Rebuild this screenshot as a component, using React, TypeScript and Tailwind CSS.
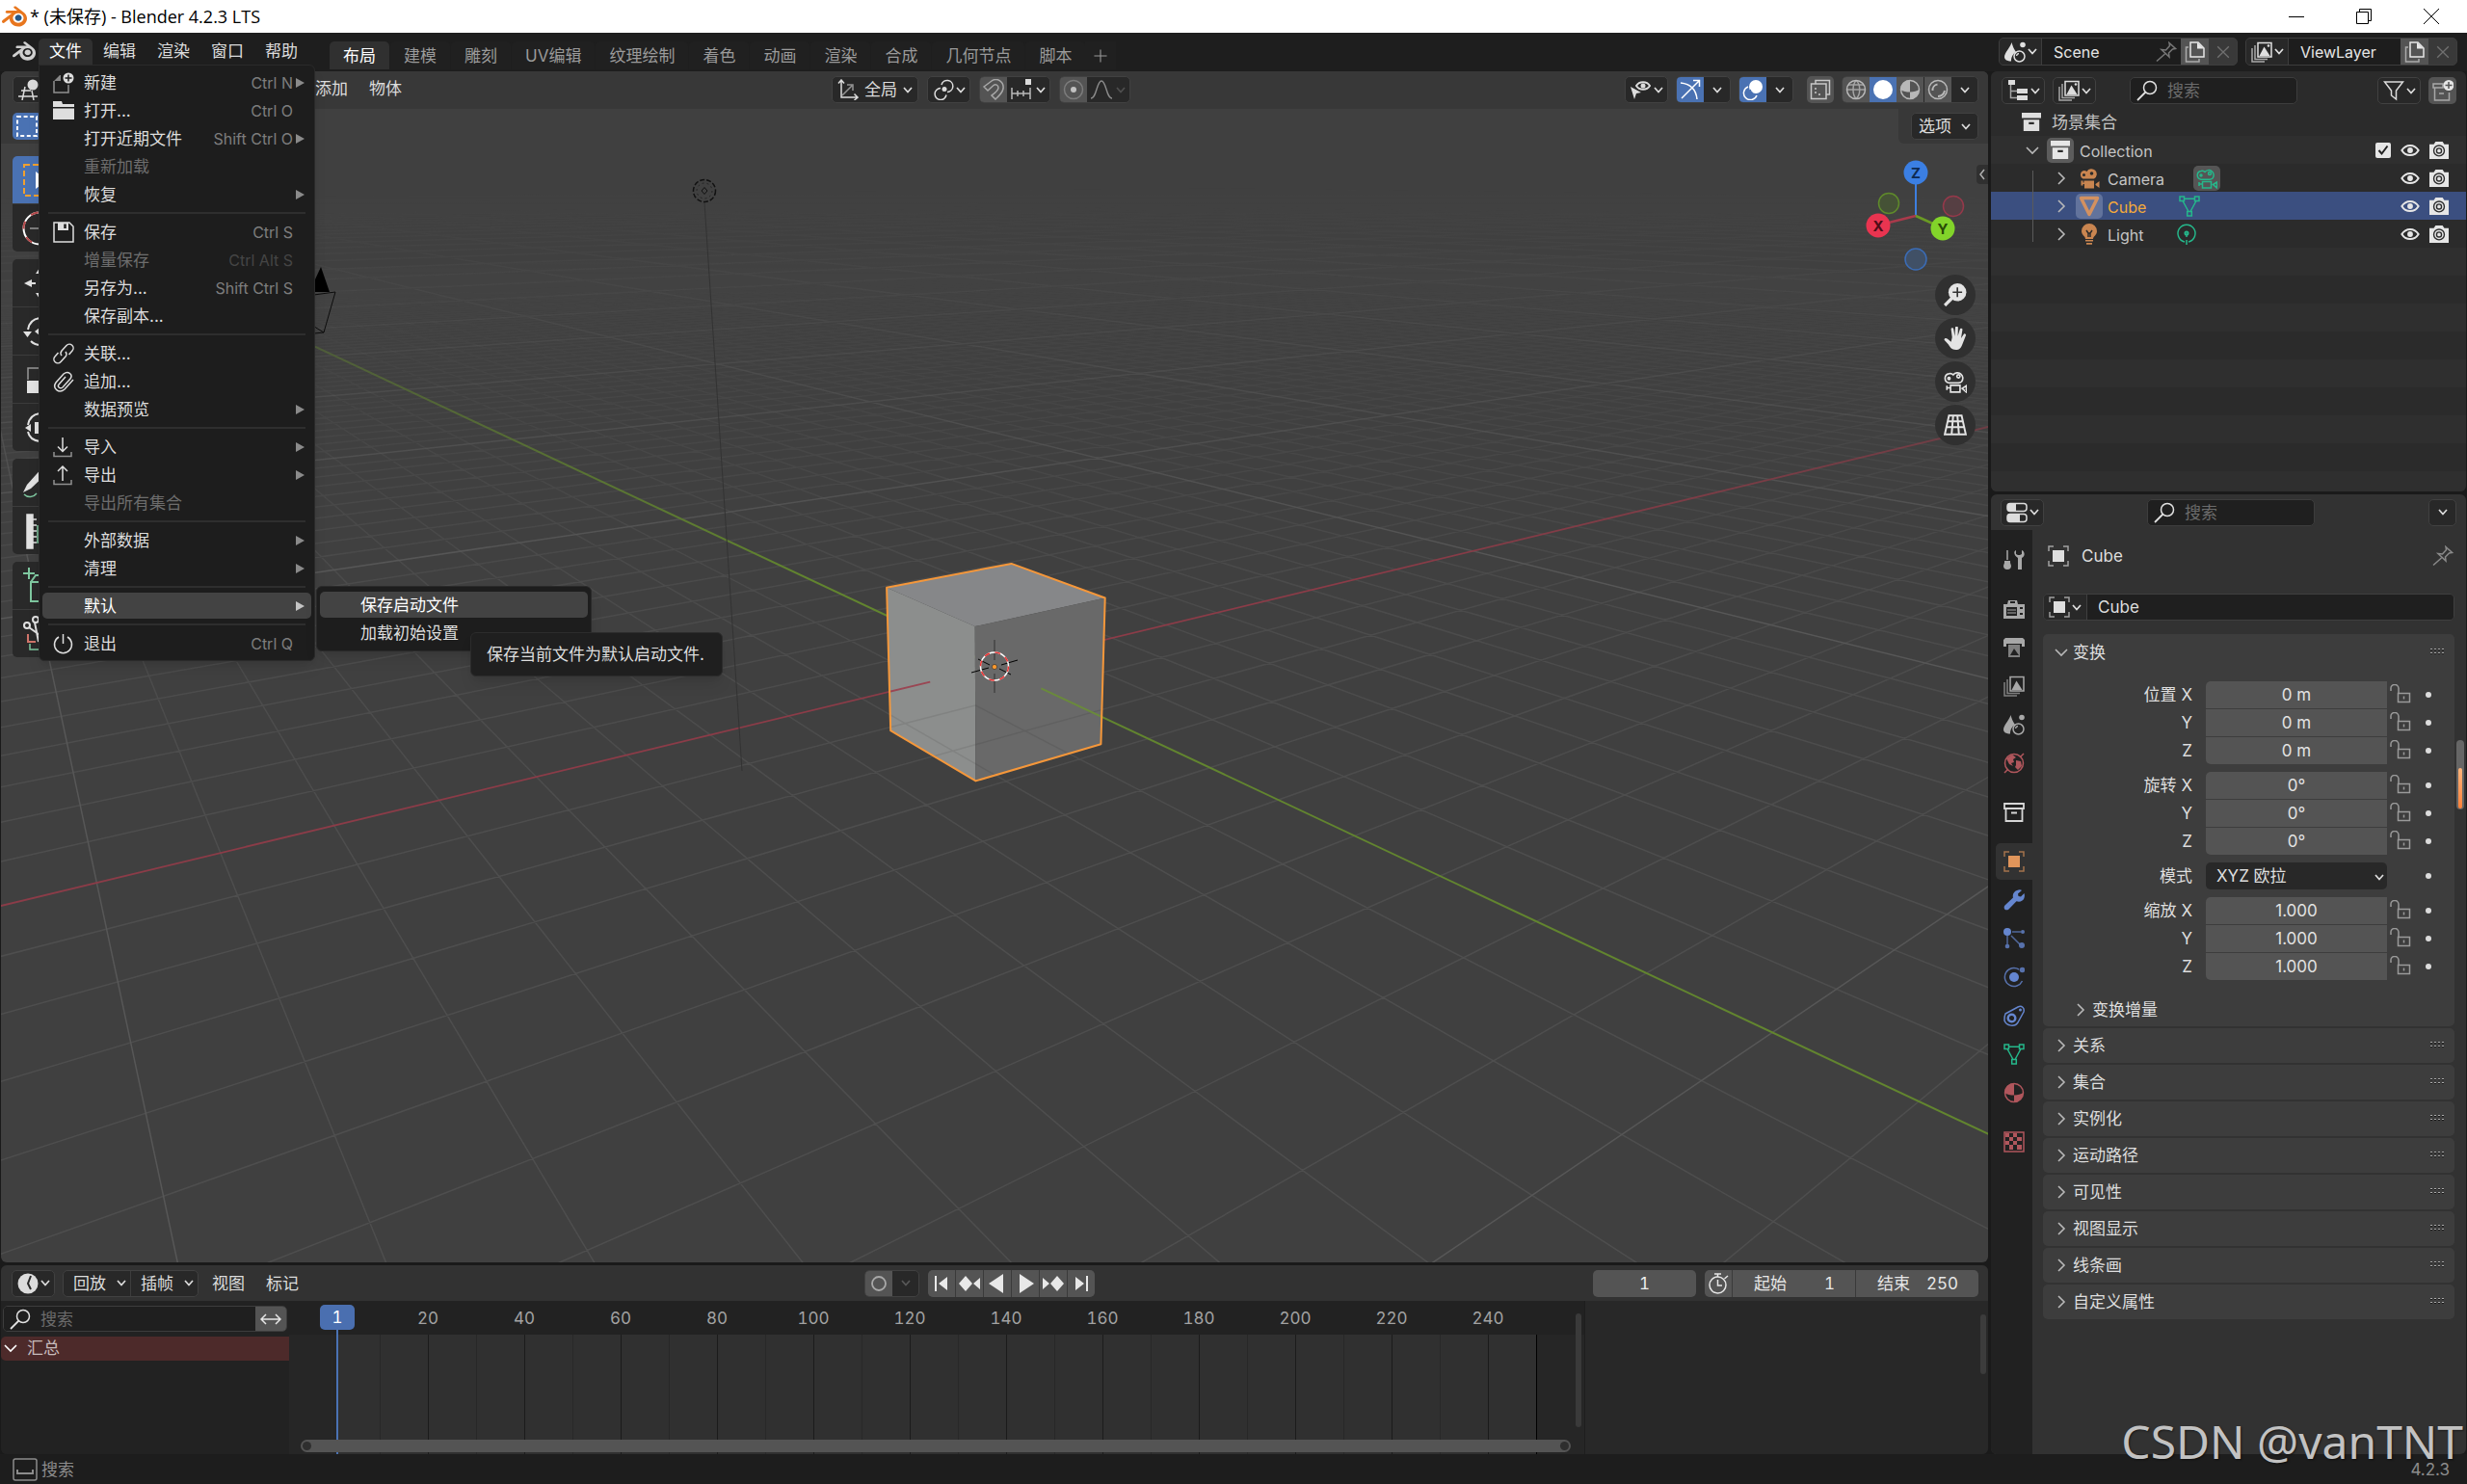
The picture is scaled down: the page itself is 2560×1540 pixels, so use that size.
import type { ReactNode } from 'react';
import clsx from 'clsx';

type Vec3 = [number, number, number];

/* ---------- icons ---------- */

function Ico({ children, size = 22, className }: { children: ReactNode; size?: number; className?: string }) {
  return (
    <svg
      width={size}
      height={size}
      viewBox="0 0 22 22"
      fill="none"
      stroke="currentColor"
      strokeWidth="1.5"
      className={clsx('shrink-0', className)}
      aria-hidden="true"
    >
      {children}
    </svg>
  );
}

function Chevron({ className }: { className?: string }) {
  return (
    <svg width="10" height="7" viewBox="0 0 10 7" fill="none" stroke="currentColor" strokeWidth="1.7" className={clsx('shrink-0', className)} aria-hidden="true">
      <path d="M1 1l4 4.5L9 1" />
    </svg>
  );
}

function Disclosure({ open, className }: { open?: boolean; className?: string }) {
  return (
    <svg width="14" height="14" viewBox="0 0 14 14" fill="none" stroke="currentColor" strokeWidth="1.6" className={clsx('shrink-0 text-[#b8b8b8]', className)} aria-hidden="true">
      {open ? <path d="M1 4l6 6 6-6" /> : <path d="M4 1l6 6-6 6" />}
    </svg>
  );
}

function BlenderLogo({ size, ring, pupil }: { size: number; ring: string; pupil: string }) {
  return (
    <svg width={size} height={size} viewBox="0 0 24 24" aria-hidden="true">
      <path
        fill={pupil}
        d="M12.51 13.214c.046-.8.438-1.506 1.03-2.006a3.424 3.424 0 0 1 2.212-.79c.85 0 1.631.3 2.211.79.592.5.983 1.206 1.028 2.005.045.823-.285 1.586-.865 2.153a3.389 3.389 0 0 1-2.374.938 3.393 3.393 0 0 1-2.376-.938c-.58-.567-.91-1.33-.865-2.152"
      />
      <path
        fill={ring}
        d="M7.35 14.831c.006.314.106.922.256 1.398a7.372 7.372 0 0 0 1.593 2.757 8.227 8.227 0 0 0 2.787 2.001 8.947 8.947 0 0 0 3.66.76 8.964 8.964 0 0 0 3.657-.772 8.285 8.285 0 0 0 2.785-2.01 7.428 7.428 0 0 0 1.592-2.762 6.964 6.964 0 0 0 .25-3.074 7.123 7.123 0 0 0-1.016-2.779 7.764 7.764 0 0 0-1.852-2.043h.002L13.566 2.55l-.02-.015c-.492-.378-1.319-.376-1.86.002-.547.382-.609 1.015-.123 1.415l-.001.001 3.126 2.543-9.53.01h-.013c-.788.001-1.545.518-1.695 1.172-.154.665.38 1.217 1.2 1.22V8.9l4.83-.01-8.62 6.617-.034.025c-.813.622-1.075 1.658-.563 2.315.52.667 1.625.668 2.447.004L7.414 14s-.069.52-.063.831zm12.09 1.741c-.97.988-2.326 1.548-3.795 1.55-1.47.004-2.827-.552-3.797-1.538a4.51 4.51 0 0 1-1.036-1.622 4.282 4.282 0 0 1 .282-3.519 4.702 4.702 0 0 1 1.153-1.371c.942-.768 2.141-1.183 3.396-1.185 1.256-.002 2.455.41 3.398 1.175.48.391.87.854 1.152 1.367a4.28 4.28 0 0 1 .522 1.706 4.236 4.236 0 0 1-.239 1.811 4.54 4.54 0 0 1-1.035 1.626"
      />
    </svg>
  );
}

const NewFileIcon = () => (
  <Ico>
    <path d="M8.5 3H7L1 9h7V3z" fill="currentColor" stroke="none" opacity=".55" />
    <path d="M1 9v12h15v-8" opacity=".6" />
    <circle cx="16" cy="6" r="5.5" fill="currentColor" stroke="none" />
    <path d="M16 2.5v7M12.5 6h7" stroke="#1d1d1d" />
  </Ico>
);
const FolderIcon = () => (
  <Ico>
    <path d="M0 1h9l1 3h12v3H0zM0 8.500h22V20H0z" fill="currentColor" stroke="none" />
  </Ico>
);
const SaveIcon = () => (
  <Ico>
    <path d="M1 1h16l4 4v16H1z" />
    <path d="M5 1h11v8H5z" fill="currentColor" stroke="none" />
    <path d="M12.500 2.500v4.500" stroke="#1d1d1d" strokeWidth="2.500" />
  </Ico>
);
const LinkIcon = () => (
  <Ico>
    <path d="M9 13a4 4 0 0 1 0-5l5-5.500a4 4 0 0 1 6 5.500L16.500 12M13 9a4 4 0 0 1 0 5l-5 5.500a4 4 0 0 1-6-5.500L5.500 10" />
  </Ico>
);
const ClipIcon = () => (
  <Ico>
    <path d="M21 9l-9 10c-6 5-13-1-9-7l8-9c5-4 10 1 7 5l-8 9c-3 2-6-1-4-3l7-8" />
  </Ico>
);
const ImportIcon = () => (
  <Ico>
    <path d="M1 16v4.500h18V16" opacity=".6" />
    <path d="M10 1v14M5 10.500l5 5 5-5" />
  </Ico>
);
const ExportIcon = () => (
  <Ico>
    <path d="M1 16v4.500h18V16" opacity=".6" />
    <path d="M10 17V2M5 7l5-5 5 5" />
  </Ico>
);
const PowerIcon = () => (
  <Ico>
    <path d="M6 4a9 9 0 1 0 9 0" />
    <path d="M10.500 1v10" />
  </Ico>
);
const SearchIcon = ({ className }: { className?: string }) => (
  <Ico className={className}>
    <circle cx="14" cy="8" r="6.500" />
    <path d="M9.500 12.500L1 21" strokeWidth="1.800" />
  </Ico>
);
const PinIcon = ({ className }: { className?: string }) => (
  <Ico className={className}>
    <path d="M14 1.500l6.500 6-3 .5-4 4 .5 4-8-7.500 4.500.5 4-4.500zM9.500 13L1 20.500" />
  </Ico>
);
const CopyIcon = () => (
  <Ico>
    <path d="M6 1h8l6 6v9H6z" fill="none" />
    <path d="M13 1l7 6.500h-7z" fill="currentColor" stroke="none" />
    <path d="M4 6H1.500v15H15v-3" opacity=".6" />
  </Ico>
);
const CrossIcon = () => (
  <Ico size={16}>
    <path d="M3 3l16 16M19 3L3 19" strokeWidth="1.800" />
  </Ico>
);
const SceneIcon = ({ className }: { className?: string }) => (
  <Ico className={className}>
    <path d="M7.500 1C6 6 0 12 0 16c0 3 3 4.500 7 4.500C7 16 9 12.500 12 11 10 8 8.500 5 7.500 1z" fill="currentColor" stroke="none" />
    <circle cx="19" cy="3.500" r="2.800" fill="currentColor" stroke="none" />
    <circle cx="15.500" cy="15.500" r="5.500" />
    <path d="M12.500 15a3 3 0 0 1 2.500-2.500" />
  </Ico>
);
const LayersIcon = ({ className }: { className?: string }) => (
  <Ico className={className}>
    <path d="M7 1.500h14V16H7z" />
    <path d="M8.500 15l5-9.500L19.500 15z" fill="currentColor" stroke="none" />
    <circle cx="18" cy="4.500" r="1.300" fill="currentColor" stroke="none" />
    <path d="M4 4v14.500h13M1 7v14h13" opacity=".7" />
  </Ico>
);
const ArchiveIcon = ({ className }: { className?: string }) => (
  <Ico className={className} size={20}>
    <path d="M0 0h22v6H0zM2 8h18v13H2z" fill="currentColor" stroke="none" />
    <path d="M8 12h6" stroke="#2b2b2b" strokeWidth="2.500" />
  </Ico>
);
const CameraShape = ({ filled }: { filled?: boolean }) =>
  filled ? (
    <>
      <path d="M5.500 3a4.500 4.500 0 0 1 3 1A5.500 5.500 0 1 1 16 11.500H4.500A4.500 4.500 0 0 1 5.500 3z" fill="currentColor" stroke="none" />
      <circle cx="5.500" cy="7.500" r="1.500" fill="#2b2b2b" stroke="none" />
      <circle cx="13.500" cy="6" r="1.800" fill="#2b2b2b" stroke="none" />
      <path d="M2.500 13.500h2v2h1v-2H16v8H6V17H4.500v1.500h-2zM17.500 17l4-3v7l-4-3z" fill="currentColor" stroke="none" />
    </>
  ) : (
    <>
      <path d="M5 3.500a4 4 0 0 1 4 1A5 5 0 1 1 17 11c-1 1-2 1.200-3 1.200H5A4.400 4.400 0 0 1 5 3.500z" />
      <circle cx="5" cy="8" r="1" />
      <circle cx="14" cy="6" r="1.500" />
      <path d="M6.500 14.500h9V21h-9zM3 15v4M3 17h3M17.500 17.500l4-2.500v6z" />
    </>
  );
const EyeIcon = () => (
  <Ico size={20}>
    <path d="M1.500 11C6 3.500 16 3.500 20.500 11 16 18.500 6 18.500 1.500 11z" strokeWidth="2.200" />
    <circle cx="11" cy="11" r="3.200" fill="currentColor" stroke="none" />
  </Ico>
);
const PhotoIcon = () => (
  <Ico size={20}>
    <path d="M0 4h5l2-3h8l2 3h5v17H0z" fill="currentColor" stroke="none" />
    <circle cx="11" cy="11.500" r="6" stroke="#2b2b2b" />
    <circle cx="11" cy="11.500" r="2.800" stroke="#2b2b2b" />
  </Ico>
);
const MeshDataIcon = ({ size = 22 }: { size?: number }) => (
  <Ico size={size}>
    <path d="M1 1h4.500v4.500H1zM16.500 1H21v4.500h-4.500zM8.700 16.500h4.600V21H8.700zM5.500 3.200h11M4 5.500l6 11M18 5.500l-6 11" />
  </Ico>
);
const ObjectIcon = ({ className }: { className?: string }) => (
  <Ico className={className}>
    <path d="M1 6V1h5M16 1h5v5M21 16v5h-5M6 21H1v-5" opacity=".65" />
    <path d="M5 5h12v12H5z" fill="currentColor" stroke="none" />
  </Ico>
);

/* ---------- 3D scene ---------- */

const VIEW = { cx: 1032, cy: 691.5, focal: 1432, dist: 17.98 };
const SIN_AZ = 0.8132;
const COS_AZ = 0.582;
const SIN_EL = 0.3368;
const COS_EL = 0.9416;

const depthOf = ([x, y, z]: Vec3) => VIEW.dist - (COS_EL * COS_AZ * x + COS_EL * SIN_AZ * y + SIN_EL * z);

function project(p: Vec3): [number, number] {
  const [x, y, z] = p;
  const k = VIEW.focal / depthOf(p);
  const right = -SIN_AZ * x + COS_AZ * y;
  const up = -SIN_EL * COS_AZ * x - SIN_EL * SIN_AZ * y + COS_EL * z;
  return [Math.round((VIEW.cx + right * k) * 10) / 10, Math.round((VIEW.cy - up * k) * 10) / 10];
}

// Line segment on the ground plane, cut off in front of the camera.
function segment(a: Vec3, b: Vec3) {
  const near = 1;
  const da = depthOf(a);
  const db = depthOf(b);
  if (da < near && db < near) return '';
  const lerp = (t: number): Vec3 => [a[0] + (b[0] - a[0]) * t, a[1] + (b[1] - a[1]) * t, a[2] + (b[2] - a[2]) * t];
  const t = (near - da) / (db - da);
  const p = project(da < near ? lerp(t) : a);
  const q = project(db < near ? lerp(t) : b);
  return `M${p[0]} ${p[1]}L${q[0]} ${q[1]}`;
}

function gridPath(reach: number, step: number, skip: number) {
  let d = '';
  for (let i = -reach; i <= reach; i += step) {
    if (i === 0 || (skip && i % skip === 0)) continue;
    d += segment([i, -reach, 0], [i, reach, 0]) + segment([-reach, i, 0], [reach, i, 0]);
  }
  return d;
}

const MINOR = gridPath(90, 1, 10);
const MAJOR = gridPath(400, 10, 0);

let frontGrid = '';
for (let i = -1; i <= 4; i++) {
  if (i === 0) continue;
  frontGrid += segment([i, i > 1 ? -6 : 1, 0], [i, 6, 0]) + segment([i > 1 ? -6 : 1, i, 0], [6, i, 0]);
}

const poly = (...pts: Vec3[]) => pts.map((p) => project(p).join(',')).join(' ');
const TOP = poly([1, -1, 1], [-1, -1, 1], [-1, 1, 1], [1, 1, 1]);
const LEFT = poly([1, -1, 1], [1, 1, 1], [1, 1, -1], [1, -1, -1]);
const RIGHT = poly([1, 1, 1], [-1, 1, 1], [-1, 1, -1], [1, 1, -1]);
const OUTLINE = poly([1, -1, 1], [-1, -1, 1], [-1, 1, 1], [-1, 1, -1], [1, 1, -1], [1, -1, -1]);

function Scene3D() {
  return (
    <svg className="absolute inset-0 h-full w-full" viewBox="1 74 2062 1236" preserveAspectRatio="xMidYMid slice" fill="none" aria-label="3D">
      <defs>
        <linearGradient id="fadeMinor" gradientUnits="userSpaceOnUse" x1="0" y1="200" x2="0" y2="900">
          <stop offset="0" stopColor="#fff" stopOpacity="0" />
          <stop offset=".1" stopColor="#fff" stopOpacity=".12" />
          <stop offset=".3" stopColor="#fff" stopOpacity=".4" />
          <stop offset=".6" stopColor="#fff" stopOpacity=".8" />
          <stop offset="1" stopColor="#fff" />
        </linearGradient>
        <linearGradient id="fadeMajor" gradientUnits="userSpaceOnUse" x1="0" y1="190" x2="0" y2="600">
          <stop offset="0" stopColor="#fff" stopOpacity="0" />
          <stop offset=".3" stopColor="#fff" stopOpacity=".3" />
          <stop offset="1" stopColor="#fff" />
        </linearGradient>
        <mask id="maskMinor" maskUnits="userSpaceOnUse" x="0" y="0" width="2070" height="1320">
          <rect width="2070" height="1320" fill="url(#fadeMinor)" />
        </mask>
        <mask id="maskMajor" maskUnits="userSpaceOnUse" x="0" y="0" width="2070" height="1320">
          <rect width="2070" height="1320" fill="url(#fadeMajor)" />
        </mask>
        <clipPath id="cubeClip">
          <polygon points={OUTLINE} />
        </clipPath>
      </defs>

      <g mask="url(#maskMinor)">
        <path d={MINOR} stroke="#4e4e4e" strokeWidth="1.500" />
      </g>
      <g mask="url(#maskMajor)">
        <path d={MAJOR} stroke="#575757" strokeWidth="1.500" />
        <path d={segment([-300, 0, 0], [300, 0, 0])} stroke="#8b3c48" strokeWidth="1.800" />
        <path d={segment([0, -300, 0], [0, 300, 0])} stroke="#62852f" strokeWidth="2" />
      </g>

      {/* light */}
      <g stroke="#111">
        <path d="M731 210L770 800" stroke="#333" />
        <circle cx="731" cy="198" r="11.500" strokeWidth="1.500" strokeDasharray="5 2" />
        <circle cx="731" cy="198" r="8" strokeDasharray="2 3" opacity=".6" />
        <path d="M731 194.500l3 3.500-3 3.500-3-3.500z" />
      </g>

      {/* camera */}
      <path d="M333 277l-12 26h21z" fill="#000" />
      <path d="M318 307l30-4-12 42-20 2M318 334l18 11" stroke="#0c0c0c" />

      <polygon points={TOP} fill="#868789" />
      <polygon points={LEFT} fill="#8c8e8d" />
      <polygon points={RIGHT} fill="#696969" />
      <g clipPath="url(#cubeClip)">
        <path d={frontGrid} stroke="#000" strokeOpacity=".08" strokeWidth="1.500" />
        <path d={segment([1, 0, 0], [6, 0, 0])} stroke="#9a4653" strokeWidth="1.800" />
        <path d={segment([0, 1, 0], [0, 6, 0])} stroke="#6a8a3c" strokeWidth="2" />
      </g>
      <polygon points={OUTLINE} stroke="#f5973a" strokeWidth="2" strokeLinejoin="round" />

      {/* 3D cursor */}
      <path d="M1032 664v21M1032 699v20" stroke="#444" strokeWidth="1.500" />
      <path d="M1008 698l18-5M1039 690l17-5M1015 684l12 6M1037 694l12 6" stroke="#000" />
      <circle cx="1032" cy="691.5" r="14.500" stroke="#fff" strokeWidth="1.500" />
      <circle cx="1032" cy="691.5" r="14.500" stroke="#e33" strokeWidth="1.500" strokeDasharray="5.700 5.700" />
      <circle cx="1032" cy="692" r="2.600" fill="#ff9a2e" stroke="#333" strokeWidth=".7" />
    </svg>
  );
}

function AxisGizmo() {
  return (
    <svg width="108" height="122" viewBox="1934 163 108 122" className="absolute top-[89px] right-[21px]" aria-hidden="true">
      <path d="M1988 224V185" stroke="#3d7fe0" strokeWidth="2" />
      <path d="M1988 224l-32 8" stroke="#a93a4b" strokeWidth="2.500" />
      <path d="M1988 224l22 10" stroke="#6a9a24" strokeWidth="2.500" />
      <circle cx="1960" cy="211" r="10.500" fill="#455236" stroke="#5f8a2b" strokeWidth="1.500" />
      <circle cx="2027" cy="214" r="10.500" fill="#563f43" stroke="#95394a" strokeWidth="1.500" />
      <circle cx="1988" cy="269" r="11" fill="#405066" stroke="#3b6cb5" strokeWidth="1.500" />
      <g fontFamily="Inter, sans-serif" fontSize="15" fontWeight="700" textAnchor="middle" fill="#111">
        <circle cx="1988" cy="179" r="12.500" fill="#3b7fe3" />
        <text x="1988" y="184.500" fill="#0d2a52">Z</text>
        <circle cx="1949" cy="234" r="12.500" fill="#ea3450" />
        <text x="1949" y="239.500" fill="#4f0d18">X</text>
        <circle cx="2016" cy="237" r="12.500" fill="#82d42a" />
        <text x="2016" y="242.500" fill="#284a06">Y</text>
      </g>
    </svg>
  );
}

const NAV: { label: string; icon: ReactNode }[] = [
  {
    label: '缩放',
    icon: (
      <>
        <circle cx="13" cy="8.500" r="8.500" fill="currentColor" stroke="none" />
        <path d="M8 14l-7 7" strokeWidth="3" />
        <path d="M13 4v9M8.500 8.500h9" stroke="#333" />
      </>
    ),
  },
  {
    label: '平移',
    icon: (
      <path
        d="M8 10L7 2.500a1.200 1.200 0 0 1 2.400-.3L10.500 9 11 1a1.300 1.300 0 0 1 2.600 0l-.2 8 2-6.500a1.200 1.200 0 0 1 2.400.5L16.500 11l2.300-3.500a1.200 1.200 0 0 1 2.200 1l-3.500 9c-1 3-3 4.500-6 4.500-4 0-5-2-7-5L.500 12.500c0-2 2-2 3.500-.5l3 2.500z"
        fill="currentColor"
        stroke="none"
      />
    ),
  },
  { label: '摄像机视图', icon: <CameraShape /> },
  {
    label: '切换透视',
    icon: <path d="M5 2h12l4 18H1zM4 7.500h14M2.500 13h17M9 2L7.500 20M13 2l1.500 18" strokeWidth="1.800" />,
  },
];

const TOOLS: { label: string; icon: ReactNode }[][] = [
  [
    {
      label: '框选',
      icon: (
        <>
          <path d="M12 8h28v32H12z" stroke="#f0a030" strokeWidth="2" strokeDasharray="6 3" />
          <path d="M24 15v18l12-9z" fill="#fff" stroke="none" />
        </>
      ),
    },
    {
      label: '游标',
      icon: (
        <>
          <circle cx="28" cy="24" r="16.500" stroke="#fff" strokeWidth="2" />
          <circle cx="28" cy="24" r="16.500" stroke="#b5484a" strokeWidth="2" strokeDasharray="8 9" />
          <path d="M18 24h20M28 14v20" opacity=".6" />
        </>
      ),
    },
  ],
  [
    { label: '移动', icon: <path d="M12 24l8-4v8zM20 23h4v2h-4zM28 8l-4 6h8zM28 40l-4-6h8z" fill="currentColor" stroke="none" /> },
    {
      label: '旋转',
      icon: (
        <>
          <path d="M28 10c-7 1-11 6-12 12M19 34c3 3 6 4 10 4" strokeWidth="2" />
          <path d="M11 24h9l-4.500 6zM28 20l-5 4 5 4z" fill="currentColor" stroke="none" />
        </>
      ),
    },
    {
      label: '缩放',
      icon: (
        <>
          <path d="M16 24V12h20v20" opacity=".6" />
          <path d="M15 25h13v13H15z" fill="currentColor" stroke="none" />
        </>
      ),
    },
    {
      label: '变换',
      icon: (
        <>
          <path d="M28 9c-7 1-11 6-12 12M16 28c1 5 5 9 12 10" strokeWidth="2" />
          <path d="M13 24l6-4v8zM23 18h10v12H23z" fill="currentColor" stroke="none" />
        </>
      ),
    },
  ],
  [
    {
      label: '标注',
      icon: (
        <>
          <path d="M11 34l4-8 18-20 6 5-20 19z" fill="currentColor" stroke="none" />
          <path d="M12 36c4 4 10 3 13-1" stroke="#7fc8a0" />
        </>
      ),
    },
    {
      label: '测量',
      icon: (
        <>
          <path d="M15 7h6v35h-6zM21 12h4M21 18h4M21 24h4M21 30h4M21 36h4" fill="currentColor" />
          <path d="M26 18v18h10" stroke="#7fc8a0" />
        </>
      ),
    },
  ],
  [
    { label: '添加立方体', icon: <path d="M17 5v12M11 11h12M19 20v20h18V20zM19 20l5-7h14" stroke="#7fc8a0" strokeWidth="2" /> },
    {
      label: '剪切',
      icon: (
        <>
          <circle cx="15" cy="15" r="3" strokeWidth="2" />
          <circle cx="24" cy="9" r="3" strokeWidth="2" />
          <path d="M17 17l14 10M23 12l4 20" strokeWidth="2" />
          <path d="M16 24v8h8" stroke="#d0746a" strokeWidth="2" />
          <path d="M18 34v6h20" stroke="#7fc8a0" />
        </>
      ),
    },
  ],
];

/* ---------- shared controls ---------- */

const boxed = 'flex h-7 items-center overflow-hidden rounded-[5px] border border-[#414141] bg-[#282828] text-[#dcdcdc]';

function IconDrop({ label, children, className }: { label: string; children: ReactNode; className?: string }) {
  return (
    <button aria-label={label} className={clsx(boxed, 'w-[45px] justify-center gap-0.5', className)}>
      {children}
      <Chevron />
    </button>
  );
}

function SearchBox({ id }: { id: string }) {
  return (
    <label htmlFor={id} className="flex h-7 w-[174px] items-center rounded-[5px] border border-[#3d3d3d] bg-[#1f1f1f] px-1.5 text-[#e0e0e0]">
      <SearchIcon />
      <input id={id} type="search" placeholder="搜索" className="ml-2.5 w-full min-w-0 bg-transparent outline-none placeholder:text-[#6b6b6b]" />
    </label>
  );
}

/* ---------- top bar ---------- */

interface MenuEntry {
  label: string;
  icon?: ReactNode;
  shortcut?: string;
  arrow?: boolean;
  disabled?: boolean;
  active?: boolean;
}

const FILE_MENU: MenuEntry[][] = [
  [
    { label: '新建', icon: <NewFileIcon />, shortcut: 'Ctrl N', arrow: true },
    { label: '打开...', icon: <FolderIcon />, shortcut: 'Ctrl O' },
    { label: '打开近期文件', shortcut: 'Shift Ctrl O', arrow: true },
    { label: '重新加载', disabled: true },
    { label: '恢复', arrow: true },
  ],
  [
    { label: '保存', icon: <SaveIcon />, shortcut: 'Ctrl S' },
    { label: '增量保存', shortcut: 'Ctrl Alt S', disabled: true },
    { label: '另存为...', shortcut: 'Shift Ctrl S' },
    { label: '保存副本...' },
  ],
  [
    { label: '关联...', icon: <LinkIcon /> },
    { label: '追加...', icon: <ClipIcon /> },
    { label: '数据预览', arrow: true },
  ],
  [
    { label: '导入', icon: <ImportIcon />, arrow: true },
    { label: '导出', icon: <ExportIcon />, arrow: true },
    { label: '导出所有集合', disabled: true },
  ],
  [
    { label: '外部数据', arrow: true },
    { label: '清理', arrow: true },
  ],
  [{ label: '默认', arrow: true, active: true }],
  [{ label: '退出', icon: <PowerIcon />, shortcut: 'Ctrl Q' }],
];

function FileMenu() {
  return (
    <div className="absolute top-full left-0 w-[287px] rounded-b-md rounded-tr-md border border-[#2a2a2a] bg-[#1d1d1d] py-[3px] shadow-lg">
      {FILE_MENU.map((group, i) => (
        <div key={i}>
          {i > 0 && <hr className="mx-[9px] my-[4px] h-0.5 border-0 bg-[#2e2e2e]" />}
          {group.map((item) => (
            <div key={item.label} className="relative mx-[3px] py-px">
              <button
                disabled={item.disabled}
                className={clsx(
                  'flex h-[27px] w-full items-center rounded-[5px] pr-[5px] pl-[11px]',
                  item.active ? 'bg-[#434343] text-white' : item.disabled ? 'text-[#6d6d6d]' : 'text-[#dedede]',
                )}
              >
                <span className="w-8">{item.icon}</span>
                <span>{item.label}</span>
                <span className={clsx('ml-auto text-base', item.disabled ? 'text-[#454545]' : 'text-[#7d7d7d]')}>{item.shortcut}</span>
                <svg width="14" height="12" viewBox="0 0 14 12" className="shrink-0" aria-hidden="true">
                  {item.arrow && <path d="M3 1l9 5-9 5z" fill={item.active ? '#c4c4c4' : '#8a8a8a'} />}
                </svg>
              </button>
              {item.active && <DefaultsMenu />}
            </div>
          ))}
        </div>
      ))}
    </div>
  );
}

function DefaultsMenu() {
  return (
    <div className="absolute -top-[6px] left-[284px] w-[286px] rounded-md border border-[#2a2a2a] bg-[#1d1d1d] px-[3px] py-[5px] text-[#dedede] shadow-lg">
      <button className="flex h-[27px] w-full items-center rounded-[5px] bg-[#434343] pl-[42px] text-white">保存启动文件</button>
      <button className="mt-0.5 flex h-[27px] w-full items-center rounded-[5px] pl-[42px]">加载初始设置</button>
      <div role="tooltip" className="absolute top-[47px] left-[159px] flex h-[46px] w-[262px] items-center rounded-md border border-[#2c2c2c] bg-[#1f1f1f] px-4 whitespace-nowrap shadow-lg">
        保存当前文件为默认启动文件.
      </div>
    </div>
  );
}

const WORKSPACES = ['布局', '建模', '雕刻', 'UV编辑', '纹理绘制', '着色', '动画', '渲染', '合成', '几何节点', '脚本'];

function IdBlock({ id, label, value, icon, pin, width }: { id: string; label: string; value: string; icon: ReactNode; pin?: boolean; width: string }) {
  return (
    <div className="flex h-[29px] items-stretch overflow-hidden rounded-[5px] border border-[#3d3d3d] bg-[#3d3d3d]">
      <button aria-label={label} className="flex w-[43px] items-center justify-center gap-0.5 bg-[#282828] text-[#e0e0e0]">
        {icon}
        <Chevron />
      </button>
      <div className={clsx('ml-px flex items-center bg-[#1d1d1d] pr-1', width)}>
        <input id={id} aria-label={label} defaultValue={value} className="w-full min-w-0 bg-transparent pl-3 text-base text-[#e6e6e6] outline-none" />
        {pin && <PinIcon className="text-[#777]" />}
      </div>
      <button aria-label="新建" className="flex w-[29px] items-center justify-center bg-[#545454] text-[#e6e6e6]">
        <CopyIcon />
      </button>
      <button aria-label="删除" className="flex w-[29px] items-center justify-center bg-[#393939] text-[#707070]">
        <CrossIcon />
      </button>
    </div>
  );
}

function TopBar() {
  return (
    <header className="relative z-20 flex h-10 items-start bg-[#1e1e1e] text-[#dcdcdc]">
      <button aria-label="Blender" className="mt-[7px] flex w-10 justify-end pr-[3px]">
        <BlenderLogo size={24} ring="#cfcfcf" pupil="#cfcfcf" />
      </button>
      <nav className="relative mt-1.5 flex">
        {['文件', '编辑', '渲染', '窗口', '帮助'].map((m, i) => (
          <button key={m} className={clsx('flex h-[27px] w-14 items-center justify-center rounded-t-[5px] pb-0.5', i === 0 && 'bg-[#303030] text-white')}>
            {m}
          </button>
        ))}
        <FileMenu />
      </nav>
      <div className="mt-[9px] ml-[22px] flex">
        {WORKSPACES.map((w, i) => (
          <button key={w} className={clsx('h-[29px] rounded-t-[5px] px-[14px]', i === 0 ? 'bg-[#303030] text-white' : 'ml-px bg-[#202020] text-[#9a9a9a]')}>
            {w}
          </button>
        ))}
        <button aria-label="添加工作区" className="flex h-[29px] w-8 items-center justify-center bg-[#202020] text-[#9a9a9a]">
          <Ico size={16}>
            <path d="M11 2v18M2 11h18" />
          </Ico>
        </button>
      </div>
      <div className="mt-[5px] mr-[10px] ml-auto flex gap-2">
        <IdBlock id="scene" label="场景" value="Scene" icon={<SceneIcon />} pin width="w-[144px]" />
        <IdBlock id="view-layer" label="视图层" value="ViewLayer" icon={<LayersIcon />} width="w-[116px]" />
      </div>
    </header>
  );
}

/* ---------- viewport ---------- */

function ViewportHeader() {
  return (
    <div className="relative flex h-[39px] items-center bg-[#383838] px-[10px] pb-px text-[#dcdcdc]">
      <div className="flex flex-1 items-center">
        <IconDrop label="编辑器类型" className="ml-0.5">
          <Ico>
            <path d="M3 12h10M0 18h20M7 8L4 22M14 12l2 10" />
            <circle cx="15" cy="6" r="5.500" fill="currentColor" stroke="none" />
          </Ico>
        </IconDrop>
        <button className="ml-[258px] px-[11px] pb-0.5">添加</button>
        <button className="px-[11px] pb-0.5">物体</button>
      </div>
      <div className="mr-7 flex items-center gap-[9px]">
        <button className={clsx(boxed, 'w-[90px] justify-center gap-1.5')}>
          <Ico>
            <path d="M4 1v18h17M1 4.500L4 1l3 3.500M17.500 15.500L21 19l-3.500 3" />
            <path d="M5 17L15 7M10 6h6v6" opacity=".6" />
          </Ico>
          <span>全局</span>
          <Chevron />
        </button>
        <IconDrop label="轴心点">
          <Ico>
            <path d="M8 9.500a6 6 0 1 0 6 7M9 6a6 6 0 1 1 6 7.500" />
            <circle cx="12" cy="10.500" r="2.500" fill="currentColor" stroke="none" />
          </Ico>
        </IconDrop>
        <div className={clsx(boxed, 'w-[74px]')}>
          <button aria-label="吸附" className="flex h-full w-7 items-center justify-center bg-[#545454] text-[#a8a8a8]">
            <Ico>
              <path d="M1 8l8-6c6-4 13 1 12 8-1 5-5 8-8 11l-4-4c4-3 7-5 7-8 0-3-3-4-5-2.500l-6 5.500z" />
            </Ico>
          </button>
          <button aria-label="吸附选项" className="flex flex-1 items-center justify-center gap-1">
            <Ico>
              <path d="M1 9v12M1 15h19M7 12v6M13 12v6M20 9v12" opacity=".8" />
              <path d="M15 0h6v6h-6z" fill="currentColor" stroke="none" />
            </Ico>
            <Chevron />
          </button>
        </div>
        <div className={clsx(boxed, 'w-[74px]')}>
          <button aria-label="衰减编辑" className="flex h-full w-7 items-center justify-center bg-[#545454]">
            <Ico>
              <circle cx="11" cy="11" r="9.500" opacity=".3" />
              <circle cx="11" cy="11" r="3" fill="currentColor" stroke="none" opacity=".8" />
            </Ico>
          </button>
          <button aria-label="衰减类型" className="flex flex-1 items-center justify-center gap-1 text-[#8a8a8a]">
            <Ico>
              <path d="M0 20c6 0 6-18 11-18s5 18 11 18" />
            </Ico>
            <Chevron className="opacity-40" />
          </button>
        </div>
      </div>
      <div className="flex flex-1 items-center justify-end gap-2">
        <IconDrop label="可见性">
          <Ico>
            <path d="M6 7c3-5 11-5 14 0-3 5-11 5-14 0z" strokeWidth="2" />
            <circle cx="13" cy="7" r="2.500" fill="currentColor" stroke="none" />
            <path d="M0 8l11 6-5 1-2 6z" fill="currentColor" stroke="none" />
          </Ico>
        </IconDrop>
        <div className={clsx(boxed, 'w-[57px]')}>
          <button aria-label="Gizmo" className="flex h-full w-7 items-center justify-center bg-[#4a72b3] text-white">
            <Ico>
              <path d="M2 20L20 2M14 1.500h6.500V8M1 4c10 1 16 7 17 17" />
            </Ico>
          </button>
          <button aria-label="Gizmo 选项" className="flex flex-1 justify-center">
            <Chevron />
          </button>
        </div>
        <div className={clsx(boxed, 'w-[57px]')}>
          <button aria-label="叠加层" className="flex h-full w-7 items-center justify-center bg-[#4a72b3] text-white">
            <Ico>
              <circle cx="14" cy="8" r="7" fill="currentColor" stroke="none" />
              <path d="M6 8a7 7 0 1 0 9 9" />
              <path d="M8 11a6 6 0 0 0 3 4" stroke="#4a72b3" />
            </Ico>
          </button>
          <button aria-label="叠加层选项" className="flex flex-1 justify-center">
            <Chevron />
          </button>
        </div>
        <button aria-label="透视模式" className="ml-1.5 flex h-7 w-7 items-center justify-center rounded-[5px] bg-[#545454] text-[#c8c8c8]">
          <Ico>
            <path d="M6 5V1.500h14.500V16H17M1.500 5H17v15.500H1.500z" />
            <path d="M6 9v7M9 16h4" strokeDasharray="2 2" />
          </Ico>
        </button>
        <div className={clsx(boxed, 'w-[142px]')}>
          <button aria-label="线框" className="flex h-full w-7 items-center justify-center bg-[#545454] text-[#b8b8b8]">
            <Ico>
              <circle cx="11" cy="11" r="9.500" />
              <path d="M11 1.500C7 6 7 16 11 20.500M1.500 11h19M11 1.500c5 4 5 15 0 19M3 6h16" opacity=".8" />
            </Ico>
          </button>
          <button aria-label="实体" className="flex h-full w-7 items-center justify-center bg-[#4a72b3] text-white">
            <Ico>
              <circle cx="11" cy="11" r="10" fill="currentColor" stroke="none" />
            </Ico>
          </button>
          <button aria-label="材质预览" className="flex h-full w-7 items-center justify-center bg-[#545454] text-[#b8b8b8]">
            <Ico>
              <circle cx="11" cy="11" r="9.500" />
              <path d="M11 1a10 10 0 0 0-10 10c3 2 6 2.500 10 2.500zM11 13.500c4 0 7-1 9.500-2.500a10 10 0 0 1-9.500 10z" fill="currentColor" stroke="none" />
            </Ico>
          </button>
          <button aria-label="渲染" className="ml-px flex h-full w-7 items-center justify-center bg-[#545454] text-[#b8b8b8]">
            <Ico>
              <circle cx="11" cy="11" r="9.500" />
              <path d="M5.500 12a6 6 0 0 1 5-6.500M18 12a7.500 7.500 0 0 1-7 6" strokeWidth="2" />
            </Ico>
          </button>
          <button aria-label="着色选项" className="flex flex-1 justify-center">
            <Chevron />
          </button>
        </div>
      </div>
    </div>
  );
}

function Viewport() {
  return (
    <section className="relative min-h-[900px] flex-1 overflow-hidden rounded-md bg-[#404040]">
      <Scene3D />
      <ViewportHeader />
      <div className="relative flex h-9 justify-between text-[#dcdcdc]">
        <div className="flex w-[320px] items-center rounded-br-md bg-[#383838] pl-3">
          <button aria-label="选择模式" className="flex h-7 w-[30px] items-center justify-center rounded-[5px] bg-[#4a72b3] text-white">
            <Ico>
              <path d="M1 1h20v20H1z" strokeWidth="2" strokeDasharray="4 2.600" />
            </Ico>
          </button>
        </div>
        <div className="flex items-center rounded-bl-md bg-[#383838] pr-[10px] pl-[13px]">
          <button className={clsx(boxed, 'w-[70px] justify-center gap-2.5')}>
            选项
            <Chevron />
          </button>
        </div>
      </div>

      <div className="absolute top-[88px] left-3 flex w-12 flex-col gap-2 text-[#e2e2e2]">
        {TOOLS.map((group, g) => (
          <div key={g} className="flex flex-col gap-px overflow-hidden rounded-[5px] bg-[#3c3c3c]">
            {group.map((tool, i) => (
              <button key={tool.label} aria-label={tool.label} className={clsx('h-[49px] w-12', g === 0 && i === 0 ? 'bg-[#4a72b3]' : 'bg-[#292929]')}>
                <svg width="48" height="48" viewBox="0 0 48 48" fill="none" stroke="currentColor" strokeWidth="1.500" aria-hidden="true">
                  {tool.icon}
                </svg>
              </button>
            ))}
          </div>
        ))}
      </div>

      <AxisGizmo />
      <div className="absolute top-[211px] right-[13px] flex flex-col gap-[3px] text-[#e4e4e4]">
        {NAV.map((n) => (
          <button key={n.label} aria-label={n.label} className="flex size-[42px] items-center justify-center rounded-full bg-[#303030]">
            <Ico size={24}>{n.icon}</Ico>
          </button>
        ))}
      </div>
      <button aria-label="展开侧栏" className="absolute top-[97px] right-0 flex h-5 w-3 items-center justify-center rounded-l bg-[#303030] text-[#b0b0b0]">
        <svg width="6" height="12" viewBox="0 0 6 12" fill="none" stroke="currentColor" strokeWidth="1.500" aria-hidden="true">
          <path d="M5 1L1 6l4 5" />
        </svg>
      </button>
    </section>
  );
}

/* ---------- timeline ---------- */

const TRANSPORT: { label: string; path: string }[] = [
  { label: '跳到开头', path: 'M4 3h2v16H4zM17 4v14l-9-7z' },
  { label: '上一关键帧', path: 'M7 3l7 8-7 8-7-8zM22 5v12l-7-6z' },
  { label: '倒放', path: 'M17 1v20L2 11z' },
  { label: '播放', path: 'M5 1v20l15-10z' },
  { label: '下一关键帧', path: 'M15 3l7 8-7 8-7-8zM0 5v12l7-6z' },
  { label: '跳到末尾', path: 'M16 3h2v16h-2zM5 4v14l9-7z' },
];

const frameX = (f: number) => 44 + f * 5;
const LABELLED = Array.from({ length: 12 }, (_, i) => (i + 1) * 20);
const HALF = Array.from({ length: 12 }, (_, i) => i * 20 + 10);

function Timeline() {
  return (
    <section className="h-[196px] overflow-hidden rounded-md bg-[#262626]">
      <div className="flex h-[37px] items-center bg-[#323232] pr-[10px] pl-[11px] text-[#dcdcdc]">
        <div className="flex flex-1 items-center">
          <IconDrop label="编辑器类型">
            <Ico>
              <circle cx="11" cy="11" r="10.500" fill="currentColor" stroke="none" />
              <path d="M14 3l-3 8 3 6" stroke="#282828" strokeWidth="2" />
            </Ico>
          </IconDrop>
          <div className={clsx(boxed, 'ml-2 w-[141px]')}>
            <button className="flex h-full flex-1 items-center justify-between border-r border-[#3d3d3d] px-2.5 pr-1">
              回放 <Chevron />
            </button>
            <button className="flex h-full flex-1 items-center justify-between px-2.5 pr-1">
              插帧 <Chevron />
            </button>
          </div>
          <button className="ml-[3px] px-[11px]">视图</button>
          <button className="px-[11px]">标记</button>
        </div>
        <div className="mr-8 flex items-center gap-[9px]">
          <div className={clsx(boxed, 'w-[57px] border-[#393939]')}>
            <button aria-label="自动插帧" className="flex h-full w-7 items-center justify-center bg-[#545454] text-[#a8a8a8]">
              <Ico>
                <circle cx="11" cy="11" r="7" strokeWidth="1.800" />
              </Ico>
            </button>
            <button aria-label="自动插帧选项" className="flex flex-1 justify-center text-[#585858]">
              <Chevron />
            </button>
          </div>
          <div className="flex h-7 gap-px overflow-hidden rounded-[5px] bg-[#3a3a3a]">
            {TRANSPORT.map((t) => (
              <button key={t.label} aria-label={t.label} className="flex w-7 items-center justify-center bg-[#545454] text-[#e8e8e8]">
                <Ico>
                  <path d={t.path} fill="currentColor" stroke="none" />
                </Ico>
              </button>
            ))}
          </div>
        </div>
        <div className="flex flex-1 items-center justify-end gap-[9px] tabular-nums">
          <input aria-label="当前帧" defaultValue="1" className="h-7 w-[107px] rounded-[5px] bg-[#545454] text-center text-[#eee] outline-none" />
          <div className="flex h-7 gap-px overflow-hidden rounded-[5px] bg-[#3a3a3a] text-[#e6e6e6]">
            <button aria-label="预览范围" className="flex w-7 items-center justify-center bg-[#545454]">
              <Ico>
                <circle cx="10.500" cy="12.500" r="8.500" />
                <path d="M10.500 7v6H15M7 1h7M10.500 1v3M17.500 6L21 3" />
              </Ico>
            </button>
            <label className="flex w-[127px] items-center bg-[#545454] pr-[21px] pl-[22px]">
              <span className="whitespace-nowrap">起始</span>
              <input defaultValue="1" className="w-full min-w-0 bg-transparent text-right outline-none" />
            </label>
            <label className="flex w-[127px] items-center bg-[#545454] pr-[21px] pl-[22px]">
              <span className="whitespace-nowrap">结束</span>
              <input defaultValue="250" className="w-full min-w-0 bg-transparent text-right outline-none" />
            </label>
          </div>
        </div>
      </div>

      <div className="flex h-[159px]">
        <div className="w-[299px] bg-[#222]">
          <div className="mt-[5px] ml-0.5 flex h-[27px] w-[295px] overflow-hidden rounded-[5px] border border-[#3d3d3d]">
            <label htmlFor="channel-search" className="flex flex-1 items-center bg-[#1f1f1f] pl-1.5 text-[#e0e0e0]">
              <SearchIcon />
              <input id="channel-search" type="search" placeholder="搜索" className="ml-2.5 w-full min-w-0 bg-transparent outline-none placeholder:text-[#6b6b6b]" />
            </label>
            <button aria-label="反向过滤" className="flex w-8 items-center justify-center bg-[#545454] text-[#e6e6e6]">
              <Ico>
                <path d="M1 11h20M6 6l-5 5 5 5M16 6l5 5-5 5" />
              </Ico>
            </button>
          </div>
          <button className="mt-[5px] flex h-[25px] w-full items-center gap-2.5 rounded-l-[5px] bg-[#4d2a2a] pb-0.5 pl-[3px] text-[#c8bcbc]">
            <Disclosure open className="text-white" />
            汇总
          </button>
        </div>
        <div className="relative flex-1">
          <svg className="absolute inset-0 h-full w-full" aria-hidden="true">
            <rect width="100%" height="35" fill="#222" />
            <rect x="49" y="35" width="1245" height="124" fill="#303030" />
            <path d={'M44.500 35v124' + HALF.map((f) => `M${frameX(f) + 0.5} 35v124`).join('')} stroke="#282828" />
            <path d={LABELLED.map((f) => `M${frameX(f) + 0.5} 35v124`).join('')} stroke="#1b1b1b" />
            <path d="M1294.500 35v124" stroke="#000" />
            <g fontFamily="Inter, sans-serif" fontSize="17" textAnchor="middle" fill="#a2a2a2" className="tabular-nums">
              {LABELLED.map((f) => (
                <text key={f} x={frameX(f)} y="24">
                  {f}
                </text>
              ))}
              <path d="M50 10v149" stroke="#4a72b3" strokeWidth="2" />
              <rect x="32" y="4" width="36" height="26" rx="5" fill="#4a6fb0" />
              <text x="50" y="23" fill="#fff">
                1
              </text>
            </g>
            <rect x="12" y="144" width="1318" height="13" rx="6.500" fill="#545454" />
            <circle cx="18.500" cy="150.500" r="4.500" fill="#2e2e2e" />
            <circle cx="1323.500" cy="150.500" r="4.500" fill="#2e2e2e" />
            <rect x="1335" y="13" width="6" height="118" rx="3" fill="#3a3a3a" />
          </svg>
        </div>
        <div className="flex w-[419px] justify-end border-l border-[#1e1e1e] bg-[#282828] pt-[14px] pr-0.5">
          <div className="h-[62px] w-1.5 rounded-full bg-[#3c3c3c]" />
        </div>
      </div>
    </section>
  );
}

/* ---------- outliner ---------- */

interface TreeRow {
  name: string;
  icon: ReactNode;
  data: ReactNode;
  selected?: boolean;
}

const OBJECTS: TreeRow[] = [
  {
    name: 'Camera',
    icon: (
      <Ico className="text-[#c98550]">
        <CameraShape filled />
      </Ico>
    ),
    data: (
      <span className="ml-[30px] flex h-[26px] w-7 items-center justify-center rounded-[5px] bg-[#555]">
        <Ico>
          <CameraShape />
        </Ico>
      </span>
    ),
  },
  {
    name: 'Cube',
    selected: true,
    icon: (
      <Ico className="text-[#d39160]">
        <path d="M2.500 2.500h17L11 19.500z" strokeWidth="3.500" strokeLinejoin="round" />
      </Ico>
    ),
    data: (
      <span className="ml-[34px]">
        <MeshDataIcon />
      </span>
    ),
  },
  {
    name: 'Light',
    icon: (
      <Ico className="text-[#c98550]">
        <path d="M11 0a8 8 0 0 1 8 8c0 4-4 5-4 8H7c0-3-4-4-4-8a8 8 0 0 1 8-8zM7 17h8v1.500H7zM8 20h6v1.800H8z" fill="currentColor" stroke="none" />
        <path d="M8 7l2 3h2l2-3M10 10v4M12 10v4" stroke="#2b2b2b" />
      </Ico>
    ),
    data: (
      <span className="ml-[34px]">
        <Ico>
          <path d="M9 19A9 9 0 1 1 13 19M11 8v6M11 17v5" />
          <circle cx="11" cy="10" r="1.800" />
        </Ico>
      </span>
    ),
  },
];

function RowToggles() {
  return (
    <>
      <button aria-label="在视图中隐藏" className="ml-2.5">
        <EyeIcon />
      </button>
      <button aria-label="在渲染中禁用" className="mr-[18px] ml-2.5">
        <PhotoIcon />
      </button>
    </>
  );
}

function Outliner() {
  return (
    <section className="flex h-[436px] flex-col overflow-hidden rounded-md bg-[#2b2b2b] text-[#c4c4c4]">
      <div className="flex h-[38px] shrink-0 items-center pt-0.5 pr-[10px] pl-[11px]">
        <IconDrop label="编辑器类型">
          <Ico>
            <path d="M1 0h7v5H1zM10 9h11v5H10zM10 16h11v5H10z" fill="currentColor" stroke="none" />
            <path d="M3.500 5v13.500H10M3.500 11.500H10" opacity=".7" />
          </Ico>
        </IconDrop>
        <IconDrop label="显示模式" className="ml-2">
          <LayersIcon />
        </IconDrop>
        <div className="ml-[35px]">
          <SearchBox id="outliner-search" />
        </div>
        <IconDrop label="过滤" className="ml-auto">
          <Ico>
            <path d="M1.500 2h19l-7 9v9l-5-4v-5z" />
          </Ico>
        </IconDrop>
        <button aria-label="新建集合" className="ml-2 flex h-7 w-[29px] items-center justify-center rounded-[5px] bg-[#545454] text-[#a8a8a8]">
          <Ico>
            <path d="M1 4h10v4H1zM2.500 8v13h15v-8M7 14h5" />
            <circle cx="17" cy="5.500" r="5.500" fill="#e6e6e6" stroke="none" />
            <path d="M17 2v7M13.500 5.500h7" stroke="#545454" />
          </Ico>
        </button>
      </div>

      <ul className="relative">
        <li className="flex h-[29px] items-center pl-8">
          <ArchiveIcon className="text-[#dedede]" />
          <span className="ml-[11px] pt-px">场景集合</span>
        </li>
        <li className="flex h-[29px] items-center bg-[#2f2f2f] pl-9 text-[#e6e6e6]">
          <Disclosure open />
          <span className="ml-2 flex h-[26px] w-7 items-center justify-center rounded-[5px] bg-[#5c5c5c]">
            <ArchiveIcon />
          </span>
          <span className="ml-1.5 flex-1 pt-0.5 text-base text-[#c4c4c4]">Collection</span>
          <label>
            <input type="checkbox" aria-label="Collection" defaultChecked className="sr-only" />
            <svg width="16" height="16" viewBox="0 0 16 16" aria-hidden="true">
              <rect width="16" height="16" rx="2" fill="#e6e6e6" />
              <path d="M3.500 8l3 3.500 6-8" fill="none" stroke="#222" strokeWidth="2" />
            </svg>
          </label>
          <RowToggles />
        </li>
        {OBJECTS.map((o, i) => (
          <li
            key={o.name}
            className={clsx('flex h-[29px] items-center pl-[66px] text-[#e6e6e6]', o.selected ? 'bg-[#3b4f80]' : i % 2 ? 'bg-[#2f2f2f]' : 'bg-[#2b2b2b]')}
          >
            <Disclosure />
            <span className={clsx('ml-2 flex h-[26px] w-7 items-center justify-center rounded-[5px]', o.selected && 'bg-[#62739c]')}>{o.icon}</span>
            <span className={clsx('ml-[5px] pt-0.5 text-base', o.selected ? 'text-[#f2a93b]' : 'text-[#c4c4c4]')}>{o.name}</span>
            <span className="flex flex-1 items-center text-[#25b88b]">{o.data}</span>
            <RowToggles />
          </li>
        ))}
        <li className="pointer-events-none absolute top-[65px] left-[43px] h-[74px] w-px bg-[#5a5a5a]" />
      </ul>
      <div className="flex-1">
        {Array.from({ length: 9 }, (_, i) => (
          <div key={i} className={clsx('h-[29px]', i % 2 ? 'bg-[#2b2b2b]' : 'bg-[#2f2f2f]')} />
        ))}
      </div>
    </section>
  );
}

/* ---------- properties ---------- */

const TABS: { label: string; color: string; gap?: boolean; active?: boolean; icon: ReactNode }[] = [
  {
    label: '工具',
    color: 'text-[#a8a8a8]',
    icon: (
      <>
        <path d="M4 1v10" />
        <path d="M1 12h6v2l1 3a4 4 0 0 1-8 0l1-3z" fill="currentColor" stroke="none" />
        <path d="M13 1v4l2 1h2l2-1V1c3 1 4 6 0 8v12h-4V9c-4-2-5-7-2-8z" fill="currentColor" stroke="none" />
      </>
    ),
  },
  {
    label: '渲染',
    color: 'text-[#a8a8a8]',
    gap: true,
    icon: (
      <>
        <path d="M0 6h4l1-4h9l1 4h7v15H0z" fill="currentColor" stroke="none" />
        <path d="M3 9h11v9H3z" fill="#212121" stroke="none" />
        <path d="M4 12h9M4 15h9" strokeWidth="1" />
        <path d="M17 10h3M17 16h3M7 4h5" stroke="#212121" strokeWidth="2" />
      </>
    ),
  },
  {
    label: '输出',
    color: 'text-[#a8a8a8]',
    icon: (
      <>
        <path d="M0 10V3l2-2h18l2 2v7h-3V7H3v3z" fill="currentColor" stroke="none" />
        <path d="M5 8h12v13H5z" fill="currentColor" stroke="none" opacity=".7" />
        <path d="M7 19l4-7 5 7z" fill="#212121" stroke="none" />
      </>
    ),
  },
  {
    label: '视图层',
    color: 'text-[#a8a8a8]',
    icon: (
      <>
        <path d="M7 1.500h14V16H7z" />
        <path d="M8.500 15l5-9.500L19.500 15z" fill="currentColor" stroke="none" />
        <path d="M4 4v14.500h13M1 7v14h13" opacity=".7" />
      </>
    ),
  },
  {
    label: '场景',
    color: 'text-[#a8a8a8]',
    icon: (
      <>
        <path d="M7.500 1C6 6 0 12 0 16c0 3 3 4.500 7 4.500C7 16 9 12.500 12 11 10 8 8.500 5 7.500 1z" fill="currentColor" stroke="none" />
        <circle cx="19" cy="3.500" r="2.800" fill="currentColor" stroke="none" />
        <circle cx="15.500" cy="15.500" r="5.500" />
        <path d="M12.500 15a3 3 0 0 1 2.500-2.500" />
      </>
    ),
  },
  {
    label: '世界',
    color: 'text-[#b0565c]',
    icon: (
      <>
        <circle cx="11" cy="11" r="9.500" />
        <path d="M3 6l6-4 4 3-3 2 1 3-3 1 2 3-4-2zM13 8l5 1 1 5-4 4-3-3 1-2z" fill="currentColor" stroke="none" />
        <path d="M1 21l4-4M17 5l4-4" />
      </>
    ),
  },
  {
    label: '集合',
    color: 'text-[#d6d6d6]',
    gap: true,
    icon: <path d="M1 2h20v5H1zM2.500 7v13h17V7M8 11.500h6" strokeWidth="1.800" />,
  },
  {
    label: '物体',
    color: 'text-[#e0955b]',
    gap: true,
    active: true,
    icon: (
      <>
        <path d="M1 6V1h5M16 1h5v5M21 16v5h-5M6 21H1v-5" opacity=".65" />
        <path d="M5 5h12v12H5z" fill="currentColor" stroke="none" />
      </>
    ),
  },
  {
    label: '修改器',
    color: 'text-[#6586cf]',
    icon: <path d="M14 1c2-1 4-1 5 0l-4 3.500.5 2.500 2.500.5L21.500 4c1 3 0 6-2 7.500-2 1.500-4 1.500-6 .8L5.500 20.500c-3 2.500-6.500-1-4-4L10 8.500C9 5 11 2 14 1z" fill="currentColor" stroke="none" />,
  },
  {
    label: '粒子',
    color: 'text-[#6586cf]',
    icon: (
      <>
        <path d="M9 4h9M4 8v9M8 8l9 9" opacity=".7" />
        <circle cx="4" cy="4" r="4" fill="currentColor" stroke="none" />
        <g fill="currentColor" stroke="none" opacity=".8">
          <circle cx="20" cy="4" r="2" />
          <circle cx="4" cy="19" r="2.300" />
          <circle cx="19" cy="18" r="3" />
        </g>
      </>
    ),
  },
  {
    label: '物理',
    color: 'text-[#6586cf]',
    icon: (
      <>
        <circle cx="11" cy="11" r="5" fill="currentColor" stroke="none" />
        <path d="M16 3A9.500 9.500 0 1 0 19.500 15" opacity=".8" />
        <circle cx="19.500" cy="3.500" r="2.800" fill="currentColor" stroke="none" opacity=".8" />
      </>
    ),
  },
  {
    label: '约束',
    color: 'text-[#6586cf]',
    icon: (
      <>
        <path d="M2 9L15 2c4-2 7 1 6 5l-6 11c-3 5-12 4-14-2 0-3 0-5 1-7z" />
        <circle cx="8.500" cy="13.500" r="3.800" strokeWidth="2.500" />
        <circle cx="17.500" cy="5" r="1.500" fill="currentColor" stroke="none" />
      </>
    ),
  },
  {
    label: '数据',
    color: 'text-[#25b88b]',
    icon: <path d="M1 1h4.500v4.500H1zM16.500 1H21v4.500h-4.500zM8.700 16.500h4.600V21H8.700zM5.500 3.200h11M4 5.500l6 11M18 5.500l-6 11" />,
  },
  {
    label: '材质',
    color: 'text-[#b0565c]',
    icon: (
      <>
        <circle cx="11" cy="11" r="9.500" />
        <path d="M11 1a10 10 0 0 0-10 10c3 2 6 2.500 10 2.500zM11 13.500c4 0 7-1 9.500-2.500a10 10 0 0 1-9.500 10z" fill="currentColor" stroke="none" />
      </>
    ),
  },
  {
    label: '纹理',
    color: 'text-[#b0565c]',
    gap: true,
    icon: (
      <>
        <path d="M1 1h20v20H1z" />
        <path d="M2 2h4v4H2zM10 2h4v4h-4zM6 6h4v4H6zM14 6h5v4h-5zM2 10h4v4H2zM10 10h4v4h-4zM6 14h4v5H6zM14 14h5v5h-5z" fill="currentColor" stroke="none" />
      </>
    ),
  },
];

const Grip = () => (
  <svg width="14" height="8" viewBox="0 0 14 8" className="ml-auto" aria-hidden="true">
    {[0, 1].map((r) =>
      [0, 1, 2, 3].map((c) => (
        <g key={`${r}${c}`}>
          <rect x={c * 4} y={r * 4} width="2" height="1" fill="#aaa" />
          <rect x={c * 4} y={r * 4 + 1} width="2" height="1" fill="#1a1a1a" />
        </g>
      )),
    )}
  </svg>
);

const LockIcon = () => (
  <Ico>
    <path d="M8.500 9.500h12v9h-12zM1 7V5a3.500 3.500 0 0 1 8-1v5.500M14.500 12.500v3" />
  </Ico>
);

function FieldGroup({ name, prefix, value }: { name: string; prefix: string; value: string }) {
  return (
    <div className="mt-2 flex flex-col gap-px">
      {['X', 'Y', 'Z'].map((axis, i) => {
        const id = `${prefix}-${axis}`;
        return (
          <div key={axis} className="flex h-7 items-center">
            <label htmlFor={id} className="w-[155px] shrink-0 text-right">
              {i === 0 ? `${name} ${axis}` : axis}
            </label>
            <input
              id={id}
              defaultValue={value}
              className={clsx(
                'ml-[14px] h-7 min-w-0 flex-1 bg-[#545454] text-center text-[#e2e2e2] outline-none',
                i === 0 && 'rounded-tl-[5px]',
                i === 2 && 'rounded-bl-[5px]',
              )}
            />
            <button aria-label={`锁定${name} ${axis}`} className="ml-[3px] shrink-0 text-[#9a9a9a]">
              <LockIcon />
            </button>
            <button aria-label="动画属性" className="mr-6 ml-[15px] size-[6px] shrink-0 rounded-full bg-[#dcdcdc]" />
          </div>
        );
      })}
    </div>
  );
}

const PANELS = ['关系', '集合', '实例化', '运动路径', '可见性', '视图显示', '线条画', '自定义属性'];

function Properties() {
  return (
    <section className="relative flex flex-1 flex-col overflow-hidden rounded-md bg-[#323232] text-[#dedede]">
      <div className="flex h-[37px] items-center pr-[10px] pl-[10px]">
        <IconDrop label="编辑器类型">
          <Ico>
            <rect x="1" y="1.500" width="20" height="8" rx="3" />
            <path d="M4 1h6v9H4a3 3 0 0 1-3-3V4a3 3 0 0 1 3-3zM4 12h10v9H4a3 3 0 0 1-3-3v-3a3 3 0 0 1 3-3z" fill="currentColor" stroke="none" />
            <rect x="1" y="12.500" width="20" height="8" rx="3" />
          </Ico>
        </IconDrop>
        <div className="ml-[107px]">
          <SearchBox id="properties-search" />
        </div>
        <button aria-label="选项" className={clsx(boxed, 'ml-auto w-[29px] justify-center')}>
          <Chevron />
        </button>
      </div>

      <div className="flex flex-1">
        <div className="flex w-[43px] shrink-0 flex-col items-end bg-[#212121] pt-3">
          {TABS.map((t) => (
            <button
              key={t.label}
              aria-label={t.label}
              className={clsx('mb-0.5 flex h-[38px] w-[38px] items-center justify-center rounded-l-[5px]', t.color, t.gap && 'mt-[11px]', t.active && 'bg-[#323232]')}
            >
              <Ico>{t.icon}</Ico>
            </button>
          ))}
        </div>

        <div className="min-w-0 flex-1 pr-3 pl-[11px]">
          <div className="flex h-[53px] items-center pr-px pl-[5px]">
            <ObjectIcon />
            <span className="ml-[13px]">Cube</span>
            <PinIcon className="ml-auto text-[#8a8a8a]" />
          </div>
          <div className="mt-[13px] flex h-7 overflow-hidden rounded-[5px] border border-[#3f3f3f]">
            <button aria-label="物体数据块" className="flex w-[45px] shrink-0 items-center justify-center gap-0.5 border-r border-[#3f3f3f] bg-[#282828]">
              <ObjectIcon />
              <Chevron />
            </button>
            <input aria-label="名称" defaultValue="Cube" className="min-w-0 flex-1 bg-[#1f1f1f] pl-[11px] outline-none" />
          </div>

          <div className="mt-[14px] h-[407px] rounded-[5px] bg-[#3d3d3d]">
            <button className="flex h-[38px] w-full items-center pr-[11px] pl-3">
              <Disclosure open />
              <span className="ml-[5px]">变换</span>
              <Grip />
            </button>
            <div className="pt-[3px]">
              <FieldGroup name="位置" prefix="loc" value="0 m" />
              <FieldGroup name="旋转" prefix="rot" value="0°" />
              <div className="mt-2 flex h-7 items-center">
                <label htmlFor="rot-mode" className="w-[155px] shrink-0 text-right">
                  模式
                </label>
                <div className="relative ml-[14px] h-7 min-w-0 flex-1">
                  <select id="rot-mode" className="h-full w-full appearance-none rounded-[5px] bg-[#282828] pl-[11px] outline-none">
                    <option>XYZ 欧拉</option>
                  </select>
                  <Chevron className="pointer-events-none absolute top-3 right-[3px]" />
                </div>
                <button aria-label="动画属性" className="mr-6 ml-10 size-[6px] shrink-0 rounded-full bg-[#dcdcdc]" />
              </div>
              <FieldGroup name="缩放" prefix="scale" value="1.000" />
            </div>
            <button className="mt-[17px] flex h-7 items-center pl-8">
              <Disclosure />
              <span className="ml-[5px]">变换增量</span>
            </button>
          </div>

          {PANELS.map((p) => (
            <button key={p} className="mt-0.5 flex h-9 w-full items-center rounded-[5px] bg-[#3d3d3d] pr-[11px] pl-3">
              <Disclosure />
              <span className="ml-[5px]">{p}</span>
              <Grip />
            </button>
          ))}
        </div>
      </div>

      <div className="absolute top-[255px] right-0.5 flex h-[72px] w-2 flex-col justify-end rounded-full bg-[#666] px-0.5 pb-px">
        <div className="h-[42px] rounded-full bg-gradient-to-b from-[#ffb47a] to-[#ff8138]" />
      </div>
    </section>
  );
}

/* ---------- window ---------- */

function TitleBar() {
  return (
    <div className="flex h-[34px] items-center bg-white pl-0.5 text-black">
      <BlenderLogo size={26} ring="#e8761e" pupil="#265787" />
      <h1 className="ml-[3px] font-['Open_Sans','Noto_Sans_CJK_SC',sans-serif] text-[18px]">* (未保存) - Blender 4.2.3 LTS</h1>
      <div className="mr-[29px] ml-auto flex items-center gap-[54px]">
        <button aria-label="最小化">
          <svg width="16" height="16" viewBox="0 0 16 16" stroke="#000" fill="none" aria-hidden="true">
            <path d="M0 8.500h16" />
          </svg>
        </button>
        <button aria-label="还原">
          <svg width="16" height="16" viewBox="0 0 16 16" stroke="#000" fill="none" aria-hidden="true">
            <path d="M.5 3.500h12v12H.5zM3.500 3.500v-3h12v12h-3" />
          </svg>
        </button>
        <button aria-label="关闭">
          <svg width="16" height="16" viewBox="0 0 16 16" stroke="#000" fill="none" aria-hidden="true">
            <path d="M0 0l16 16M16 0L0 16" />
          </svg>
        </button>
      </div>
    </div>
  );
}

export default function App() {
  return (
    <div className="relative flex min-h-screen flex-col bg-[#1a1a1a] font-['Inter','Noto_Sans_CJK_SC',sans-serif] text-[17px] leading-6">
      <TitleBar />
      <TopBar />
      <main className="flex flex-1 gap-[3px] px-px">
        <div className="flex min-w-0 flex-1 flex-col gap-[3px]">
          <Viewport />
          <Timeline />
        </div>
        <div className="flex w-[493px] shrink-0 flex-col gap-[3px]">
          <Outliner />
          <Properties />
        </div>
      </main>
      <footer className="flex h-[31px] items-center bg-[#1d1d1d] pr-[18px] pl-[13px] text-[#8c8c8c]">
        <svg width="26" height="24" viewBox="0 0 26 24" fill="none" stroke="currentColor" strokeWidth="1.500" aria-hidden="true">
          <rect x="1" y="1" width="24" height="22" rx="2" />
          <path d="M5 12v4h16v-4" strokeWidth="2" />
        </svg>
        <span className="ml-1">搜索</span>
        <span className="ml-auto">4.2.3</span>
      </footer>
      <div className="pointer-events-none absolute right-1 bottom-3 z-30 font-['Noto_Sans',sans-serif] text-[48px] leading-[64px] text-[#c2c2c2] [text-shadow:1px_1px_2px_#0008]">
        CSDN @vanTNT
      </div>
    </div>
  );
}
